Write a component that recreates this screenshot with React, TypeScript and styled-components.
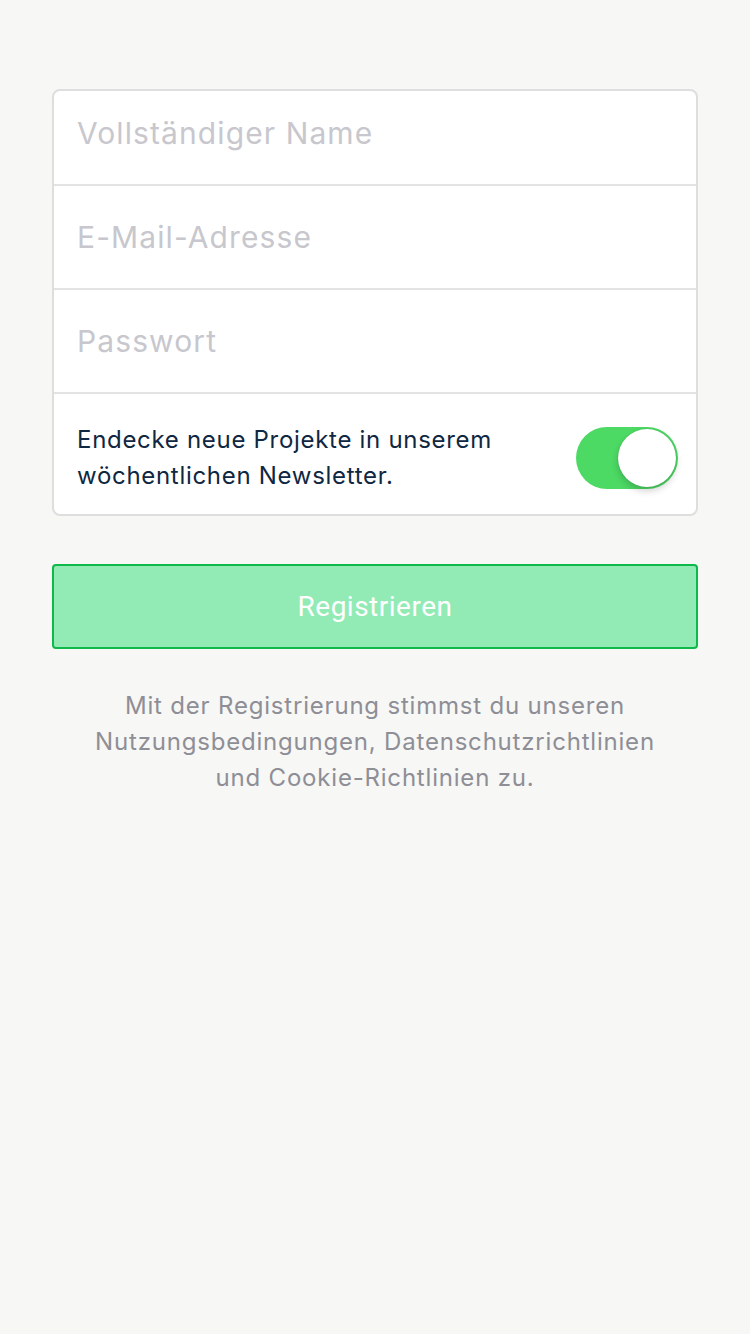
import React, { useState } from "react";
import styled, { createGlobalStyle } from "styled-components";

const Global = createGlobalStyle`
  html, body { margin: 0; padding: 0; background: #f7f7f5; }
  body { font-family: "Inter", "Roboto", sans-serif; -webkit-font-smoothing: antialiased; }
  * { box-sizing: border-box; }
`;

const Page = styled.div`
  width: 750px;
  min-height: 1334px;
  background: #f7f7f5;
  padding: 89px 52px 0 52px;
  display: flex;
  flex-direction: column;
`;

const Card = styled.div`
  background: #ffffff;
  border: 2px solid #dededf;
  border-radius: 8px;
  display: flex;
  flex-direction: column;
  overflow: hidden;
`;

const Field = styled.input`
  height: 104px;
  border: none;
  border-bottom: 2px solid #e3e3e4;
  padding: 0 23px;
  font-family: "Inter", sans-serif;
  font-size: 30px;
  letter-spacing: 1.1px;
  color: #1a2a3a;
  background: transparent;
  outline: none;
  &:first-child { height: 95px; padding-bottom: 9px; }
  &::placeholder { color: #c7c7cd; }
`;

const ToggleRow = styled.div`
  height: 120px;
  display: flex;
  align-items: center;
  justify-content: space-between;
  padding: 8px 18px 0 23px;
`;

const ToggleLabel = styled.span`
  font-family: "Inter", sans-serif;
  font-size: 24px;
  letter-spacing: 0.7px;
  line-height: 36px;
  color: #0f2742;
`;

const Switch = styled.button<{ $on: boolean }>`
  width: 102px;
  height: 62px;
  border-radius: 31px;
  border: none;
  padding: 0;
  background: ${(p) => (p.$on ? "#4cd964" : "#e5e5ea")};
  display: flex;
  align-items: center;
  justify-content: ${(p) => (p.$on ? "flex-end" : "flex-start")};
  cursor: pointer;
`;

const Knob = styled.span`
  width: 58px;
  height: 58px;
  margin: 2px;
  border-radius: 50%;
  background: #ffffff;
  box-shadow: 0 4px 7px rgba(0, 0, 0, 0.18), 0 0 1px rgba(0, 0, 0, 0.25);
`;

const Submit = styled.button`
  margin-top: 48px;
  height: 85px;
  border: 2px solid #0fb84a;
  border-radius: 4px;
  background: #92ebb5;
  color: #ffffff;
  font-family: "Roboto", sans-serif;
  font-size: 28px;
  letter-spacing: 0.5px;
  cursor: pointer;
`;

const Terms = styled.p`
  margin: 39px 0 0;
  text-align: center;
  font-family: "Inter", sans-serif;
  font-size: 24px;
  letter-spacing: 0.8px;
  line-height: 36px;
  color: #8e8e96;
`;

export default function App() {
  const [on, setOn] = useState(true);
  return (
    <>
      <Global />
      <Page>
        <Card>
          <Field placeholder="Vollständiger Name" />
          <Field placeholder="E-Mail-Adresse" />
          <Field placeholder="Passwort" type="password" />
          <ToggleRow>
            <ToggleLabel>
              Endecke neue Projekte in unserem
              <br />
              wöchentlichen Newsletter.
            </ToggleLabel>
            <Switch $on={on} onClick={() => setOn(!on)} aria-label="Newsletter">
              <Knob />
            </Switch>
          </ToggleRow>
        </Card>
        <Submit>Registrieren</Submit>
        <Terms>
          Mit der Registrierung stimmst du unseren
          <br />
          Nutzungsbedingungen, Datenschutzrichtlinien
          <br />
          und Cookie-Richtlinien zu.
        </Terms>
      </Page>
    </>
  );
}
